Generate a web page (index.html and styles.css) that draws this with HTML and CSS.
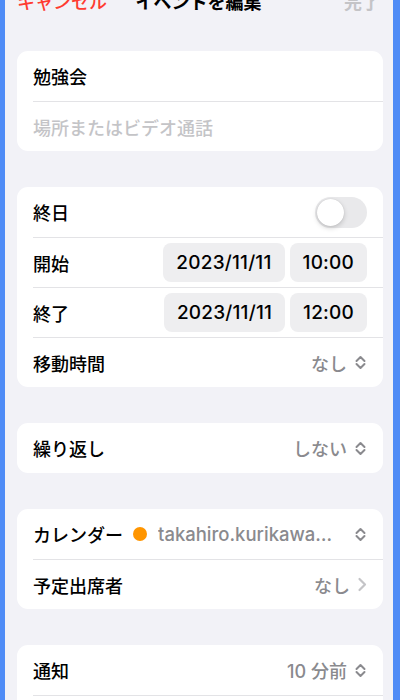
FILE: index.html
```html
<!DOCTYPE html>
<html lang="ja">
<head>
  <meta charset="UTF-8" />
  <meta name="viewport" content="width=device-width, initial-scale=1.0" />
  <title>イベントを編集</title>
  <link rel="stylesheet" href="styles.css">
</head>
<body>
  <header class="navbar">
    <span class="nav-cancel">キャンセル</span>
    <span class="nav-title">イベントを編集</span>
    <span class="nav-done">完了</span>
  </header>

  <main>
    <section class="group">
      <div class="row"><span class="label">勉強会</span></div>
      <div class="row"><span class="placeholder">場所またはビデオ通話</span></div>
    </section>

    <section class="group">
      <div class="row">
        <span class="label">終日</span>
        <span class="toggle"><span class="knob"></span></span>
      </div>
      <div class="row">
        <span class="label">開始</span>
        <span class="pills">
          <span class="pill">2023/11/11</span>
          <span class="pill">10:00</span>
        </span>
      </div>
      <div class="row">
        <span class="label">終了</span>
        <span class="pills">
          <span class="pill">2023/11/11</span>
          <span class="pill">12:00</span>
        </span>
      </div>
      <div class="row">
        <span class="label">移動時間</span>
        <span class="value">なし
          <svg class="updown" viewBox="0 0 13 15"><path d="M2.5 6 L6.5 2 L10.5 6 M2.5 9 L6.5 13 L10.5 9" /></svg>
        </span>
      </div>
    </section>

    <section class="group">
      <div class="row">
        <span class="label">繰り返し</span>
        <span class="value">しない
          <svg class="updown" viewBox="0 0 13 15"><path d="M2.5 6 L6.5 2 L10.5 6 M2.5 9 L6.5 13 L10.5 9" /></svg>
        </span>
      </div>
    </section>

    <section class="group">
      <div class="row">
        <span class="label">カレンダー</span>
        <span class="calendar">
          <span class="dot"></span>
          <span class="account">takahiro.kurikawa@example.com</span>
        </span>
        <svg class="updown" viewBox="0 0 13 15"><path d="M2.5 6 L6.5 2 L10.5 6 M2.5 9 L6.5 13 L10.5 9" /></svg>
      </div>
      <div class="row">
        <span class="label">予定出席者</span>
        <span class="value">なし
          <svg class="disclosure" viewBox="0 0 10 15"><path d="M2.5 2 L8 7.5 L2.5 13" /></svg>
        </span>
      </div>
    </section>

    <section class="group">
      <div class="row">
        <span class="label">通知</span>
        <span class="value">10 分前
          <svg class="updown" viewBox="0 0 13 15"><path d="M2.5 6 L6.5 2 L10.5 6 M2.5 9 L6.5 13 L10.5 9" /></svg>
        </span>
      </div>
      <div class="row">
        <span class="label">2番目の通知</span>
        <span class="value">なし
          <svg class="updown" viewBox="0 0 13 15"><path d="M2.5 6 L6.5 2 L10.5 6 M2.5 9 L6.5 13 L10.5 9" /></svg>
        </span>
      </div>
    </section>
  </main>
</body>
</html>
```

FILE: styles.css
```css
* {
  margin: 0;
  padding: 0;
  box-sizing: border-box;
}
body {
  background: #f2f2f7;
  border-left: 5px solid #4f8cf6;
  border-right: 7px solid #4f8cf6;
  min-height: 100vh;
  overflow: hidden;
  font-family: Inter, "Noto Sans CJK JP", sans-serif;
  font-size: 18px;
  color: #000;
}
.navbar {
  display: grid;
  grid-template-columns: 1fr auto 1fr;
  align-items: center;
  height: 24px;
  margin-top: -9px;
  padding: 0 13px 0 12px;
  line-height: 24px;
}
.nav-cancel {
  color: #ff3b30;
  font-weight: 500;
}
.nav-title {
  font-weight: 700;
}
.nav-done {
  justify-self: end;
  color: #c4c4c7;
  font-weight: 700;
}
main {
  padding: 36px 10px 0 12px;
}
.group {
  background: #fff;
  border-radius: 11px;
  margin-bottom: 36px;
  overflow: hidden;
}
.row {
  display: flex;
  align-items: center;
  height: 50px;
  margin-left: 16px;
  padding-right: 16px;
}
.row + .row {
  border-top: 1px solid #e3e3e6;
}
.label {
  font-weight: 500;
  white-space: nowrap;
}
.placeholder {
  color: #c4c4c7;
  font-weight: 500;
}
.value {
  margin-left: auto;
  display: flex;
  align-items: center;
  gap: 7px;
  color: #8a8a8e;
  font-weight: 500;
}
.updown {
  width: 13px;
  height: 15px;
  flex-shrink: 0;
  fill: none;
  stroke: #8a8a8e;
  stroke-width: 2;
  stroke-linecap: round;
  stroke-linejoin: round;
}
.disclosure {
  width: 10px;
  height: 15px;
  fill: none;
  stroke: #c4c4c7;
  stroke-width: 2.2;
  stroke-linecap: round;
  stroke-linejoin: round;
}
.toggle {
  margin-left: auto;
  width: 52px;
  height: 31px;
  border-radius: 16px;
  background: #e9e9eb;
  padding: 2px;
}
.knob {
  display: block;
  width: 27px;
  height: 27px;
  border-radius: 50%;
  background: #fff;
  box-shadow: 0 2px 5px rgba(0, 0, 0, 0.18), 0 0 1px rgba(0, 0, 0, 0.15);
}
.pills {
  margin-left: auto;
  display: flex;
  gap: 5px;
}
.pill {
  height: 39px;
  line-height: 39px;
  padding: 0 13px;
  border-radius: 8px;
  background: #eeeef0;
  font-size: 19px;
  font-weight: 500;
  letter-spacing: 0.2px;
}
.calendar {
  display: flex;
  align-items: center;
  gap: 11px;
  min-width: 0;
  flex: 1;
  margin: 0 14px 0 10px;
}
.dot {
  width: 14px;
  height: 14px;
  border-radius: 50%;
  background: #ff9500;
  flex-shrink: 0;
}
.account {
  color: #8a8a8e;
  font-weight: 500;
  font-size: 18.5px;
  white-space: nowrap;
  overflow: hidden;
  text-overflow: ellipsis;
}
```
